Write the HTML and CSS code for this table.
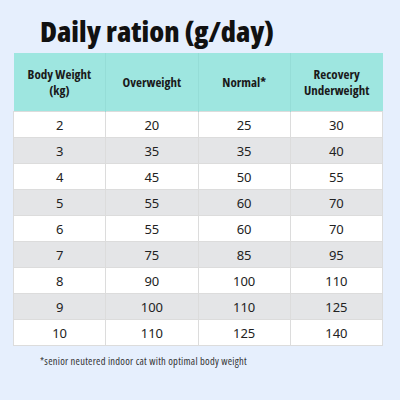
FILE: index.html
```html
<!DOCTYPE html>
<html lang="en">
<head>
    <meta charset="UTF-8">
    <title>Daily ration</title>
    <link rel="stylesheet" href="styles.css">
</head>
<body>
    <div class="page">
        <h1 class="title">Daily ration (g/day)</h1>
        <table class="ration">
            <thead>
                <tr>
                    <th>Body Weight<br>(kg)</th>
                    <th>Overweight</th>
                    <th>Normal*</th>
                    <th>Recovery<br>Underweight</th>
                </tr>
            </thead>
            <tbody>
                <tr><td>2</td><td>20</td><td>25</td><td>30</td></tr>
                <tr><td>3</td><td>35</td><td>35</td><td>40</td></tr>
                <tr><td>4</td><td>45</td><td>50</td><td>55</td></tr>
                <tr><td>5</td><td>55</td><td>60</td><td>70</td></tr>
                <tr><td>6</td><td>55</td><td>60</td><td>70</td></tr>
                <tr><td>7</td><td>75</td><td>85</td><td>95</td></tr>
                <tr><td>8</td><td>90</td><td>100</td><td>110</td></tr>
                <tr><td>9</td><td>100</td><td>110</td><td>125</td></tr>
                <tr><td>10</td><td>110</td><td>125</td><td>140</td></tr>
            </tbody>
        </table>
        <p class="note">*senior neutered indoor cat with optimal body weight</p>
    </div>
</body>
</html>
```

FILE: styles.css
```css
html, body {
    margin: 0;
    background: #e6effd;
}
.page {
    width: 400px;
    height: 400px;
    padding: 15px 0 0 13px;
    box-sizing: border-box;
    font-family: "Noto Sans", sans-serif;
    color: #222;
}
.title {
    margin: 0 0 6px 27px;
    font-family: "Open Sans", sans-serif;
    font-size: 29px;
    line-height: 32px;
    font-weight: 800;
    font-stretch: 75%;
    color: #111;
}
.ration {
    width: 370px;
    border-collapse: collapse;
    table-layout: fixed;
}
.ration th {
    height: 58px;
    padding: 0;
    background: #9ee6e0;
    font-family: "Open Sans", sans-serif;
    font-size: 13px;
    line-height: 16px;
    font-weight: 700;
    font-stretch: 75%;
    color: #1a1a1a;
    border-right: 1px solid #95ddd7;
}
.ration th:last-child {
    border-right: none;
}
.ration td {
    height: 25px;
    padding: 0;
    text-align: center;
    font-size: 13px;
    border: 1px solid #dcdcdc;
    background: #fff;
}
.ration tbody tr:nth-child(even) td {
    background: #e4e5e7;
}
.note {
    margin: 8px 0 0 27px;
    font-family: "Open Sans", sans-serif;
    font-size: 10.5px;
    font-stretch: 75%;
    letter-spacing: 0.25px;
    color: #333;
}
```
